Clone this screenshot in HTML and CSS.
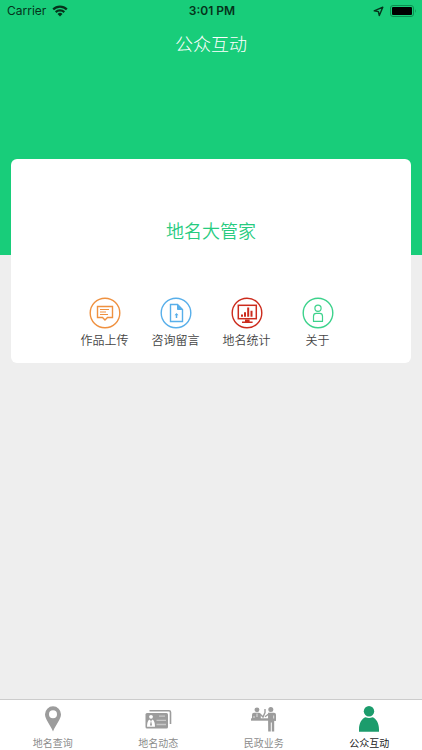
FILE: index.html
```html
<!DOCTYPE html>
<html lang="zh-CN">
<head>
<meta charset="utf-8">
<meta name="viewport" content="width=device-width, initial-scale=1">
<title>公众互动</title>
<link rel="stylesheet" href="styles.css">
</head>
<body>
<header class="hero">
  <div class="status">
    <div class="status-left">
      <span>Carrier</span>
      <svg width="16" height="12" viewBox="0 0 16 12" aria-hidden="true"><g fill="none" stroke="#05331b" stroke-width="2.2"><path d="M1.2 4.4a9.6 9.6 0 0 1 13.6 0"/><path d="M3.7 7.1a6.1 6.1 0 0 1 8.6 0"/></g><path d="M5.5 8.9a3.6 3.6 0 0 1 5 0L8 11.4z" fill="#05331b"/></svg>
    </div>
    <span class="clock">3:01 PM</span>
    <div class="status-right">
      <svg width="11" height="11" viewBox="0 0 11 11" aria-hidden="true"><path d="M9.8 1.2 6.3 9.6 5.4 5.6 1.2 4.8z" fill="none" stroke="#05331b" stroke-width="1.4" stroke-linejoin="round"/></svg>
      <svg width="27" height="12" viewBox="0 0 27 12" aria-hidden="true"><rect x=".5" y=".5" width="23" height="11" rx="2.5" fill="none" stroke="#0b8f50"/><rect x="2" y="2" width="20" height="8" rx="1" fill="#000"/><path d="M25 4q1.6 2 0 4z" fill="#0b8f50"/></svg>
    </div>
  </div>
  <h1 class="title">公众互动</h1>
</header>
<main class="content">
  <section class="card">
    <h2 class="brand">地名大管家</h2>
    <nav class="actions">
      <a class="action" href="#upload">
        <svg class="action-icon" viewBox="0 0 32 32" fill="none" stroke="#ef9140" aria-hidden="true"><circle cx="16" cy="16" r="14.8" stroke-width="1.4"/><path d="M8.5 9.5h15v11h-5L16 23l-2.5-2.5h-5z" stroke-width="1.4"/><path d="M11 12.5h9M11 15h6M11 17.5h8" stroke-width="1.1"/></svg>
        <span>作品上传</span>
      </a>
      <a class="action" href="#message">
        <svg class="action-icon" viewBox="0 0 32 32" fill="none" stroke="#58afea" aria-hidden="true"><circle cx="16" cy="16" r="14.8" stroke-width="1.4"/><path d="M10.5 7.5h7l5 5v12h-12z" stroke-width="1.4"/><path d="M17.5 7.5v5h5z" fill="#58afea"/><path d="M16.5 21v-4" stroke-width="1.5"/><path d="m14.5 18.3 2-2.3 2 2.3z" fill="#58afea" stroke="none"/></svg>
        <span>咨询留言</span>
      </a>
      <a class="action" href="#stats">
        <svg class="action-icon" viewBox="0 0 32 32" fill="none" stroke="#cc2b1d" aria-hidden="true"><circle cx="16" cy="16" r="14.8" stroke-width="1.4"/><rect x="7.3" y="8.3" width="18" height="13.4" stroke-width="1.5"/><path d="M11 19.8v-2.3M14 19.8v-4.6M17.2 19.8v-9.3M20.5 19.8v-6" stroke-width="2"/><path d="M14 22.5h4.6v2h3V26H11v-1.5h3z" fill="#cc2b1d" stroke="none"/></svg>
        <span>地名统计</span>
      </a>
      <a class="action" href="#about">
        <svg class="action-icon" viewBox="0 0 32 32" fill="none" stroke="#3dd28c" aria-hidden="true"><circle cx="16" cy="16" r="14.8" stroke-width="1.4"/><circle cx="16" cy="11.2" r="3.1" stroke-width="1.2"/><path d="M11.5 24.4v-5.2q0-2.8 2.8-2.8h3.4q2.8 0 2.8 2.8v5.2z" stroke-width="1.2" stroke-linejoin="round"/></svg>
        <span>关于</span>
      </a>
    </nav>
  </section>
</main>
<nav class="tabs">
  <a class="tab" href="#search">
    <svg class="tab-icon" viewBox="0 0 28 28" aria-hidden="true"><path fill="#9c9c9c" fill-rule="evenodd" d="M14 1.3a8 8 0 0 0-8 8c0 5 5 10 8 17.2 3-7.2 8-12.2 8-17.2a8 8 0 0 0-8-8zm0 4a4 4 0 1 1 0 8 4 4 0 0 1 0-8z"/></svg>
    <span>地名查询</span>
  </a>
  <a class="tab" href="#news">
    <svg class="tab-icon" viewBox="0 0 28 28" aria-hidden="true"><path d="M5.5 5.8H25q1.5 0 1.5 1.5V19" fill="none" stroke="#9c9c9c" stroke-width="1.6"/><rect x="1.5" y="8" width="22.5" height="15.5" rx="1.5" fill="#9c9c9c"/><circle cx="7" cy="11.8" r="1.9" fill="#fff"/><path d="M3 21.8q0-5.5 2.2-7.3L7 16l1.8-1.5q2.2 1.8 2.2 7.3z" fill="#fff"/><path d="m7 15.500-1 4.500 1 1 1-1z" fill="#9c9c9c"/><path d="M15 11.2h6M12.5 15.3H22M12.5 19.5H22" stroke="#c8c8c8" stroke-width="1.3"/></svg>
    <span>地名动态</span>
  </a>
  <a class="tab" href="#affairs">
    <svg class="tab-icon" viewBox="0 0 28 28" aria-hidden="true"><g fill="#9c9c9c"><circle cx="7" cy="4.800" r="2.4"/><circle cx="20.8" cy="4.5" r="2.5"/><path d="M1 13.3h25v2.4H1z"/><path d="M2 14V9.8Q2 7.8 4 7.8h5q1.500 0 1.800 2V14z"/><path d="M18 7.8h6q2 0 2 2v6h-1.800V26.500h-2.400v-9h-1v9h-2.600z"/></g><path d="m10 9 3 3 2-4.500V4M15 11.700l4-3" fill="none" stroke="#9c9c9c" stroke-width="1.4"/><path d="M7 8.500v3.500M4 11v2M23.700 10.500v3" fill="none" stroke="#fff" stroke-width=".7"/></svg>
    <span>民政业务</span>
  </a>
  <a class="tab tab-active" href="#public" aria-current="page">
    <svg class="tab-icon" viewBox="0 0 28 28" fill="#1c9c6c" aria-hidden="true"><circle cx="14" cy="6.2" r="5.2"/><path d="M4 26.8v-2.3C4 18 7 13.500 10.500 12.300q3.500 1.400 7 0C21 13.500 24 18 24 24.500v2.300z"/></svg>
    <span>公众互动</span>
  </a>
</nav>
</body>
</html>
```
FILE: styles.css
```css
* {
  box-sizing: border-box;
}

body {
  margin: 0;
  min-height: 100vh;
  display: flex;
  flex-direction: column;
  background: #eee;
  color: #444;
  font-family: Inter, "Noto Sans CJK SC", sans-serif;
}

a {
  color: inherit;
  text-decoration: none;
}

svg {
  display: block;
  flex: none;
}

.hero {
  background: #18cd7a;
  padding-bottom: 191px;
}

.status {
  display: grid;
  grid-template-columns: 1fr auto 1fr;
  align-items: center;
  height: 22px;
  padding: 0 5px 0 7px;
  color: #05331b;
  font-size: 12px;
  line-height: 22px;
}

.status-left,
.status-right {
  display: flex;
  align-items: center;
  gap: 6px;
}

.status-right {
  justify-content: flex-end;
}

.clock {
  font-weight: 600;
}

.title,
.brand {
  margin: 0;
  text-align: center;
  font-family: "Noto Sans CJK SC", sans-serif;
  font-size: 18px;
}

.title {
  color: #fff;
  font-weight: 300;
  line-height: 42px;
}

.content {
  flex: 1;
  padding: 0 11px;
}

.card {
  margin-top: -96px;
  padding: 55px 0 12px;
  border-radius: 6px;
  background: #fff;
}

.brand {
  color: #27cb80;
  font-weight: 350;
  line-height: 32px;
}

.actions {
  display: grid;
  grid-template-columns: repeat(4, 71px);
  justify-content: center;
  margin-top: 51px;
}

.action,
.tab {
  display: flex;
  flex-direction: column;
  align-items: center;
}

.action {
  gap: 2px;
  font-size: 12px;
  font-weight: 350;
  line-height: 20px;
}

.action-icon {
  width: 32px;
  height: 32px;
}

.tabs {
  display: grid;
  grid-template-columns: repeat(4, 1fr);
  border-top: 1px solid #ccc;
  background: #fff;
}

.tab {
  gap: 3px;
  padding-top: 5px;
  color: #8c8c8c;
  font-size: 10px;
  line-height: 14px;
}

.tab-active {
  color: #222;
}

.tab-icon {
  width: 28px;
  height: 28px;
}
```
